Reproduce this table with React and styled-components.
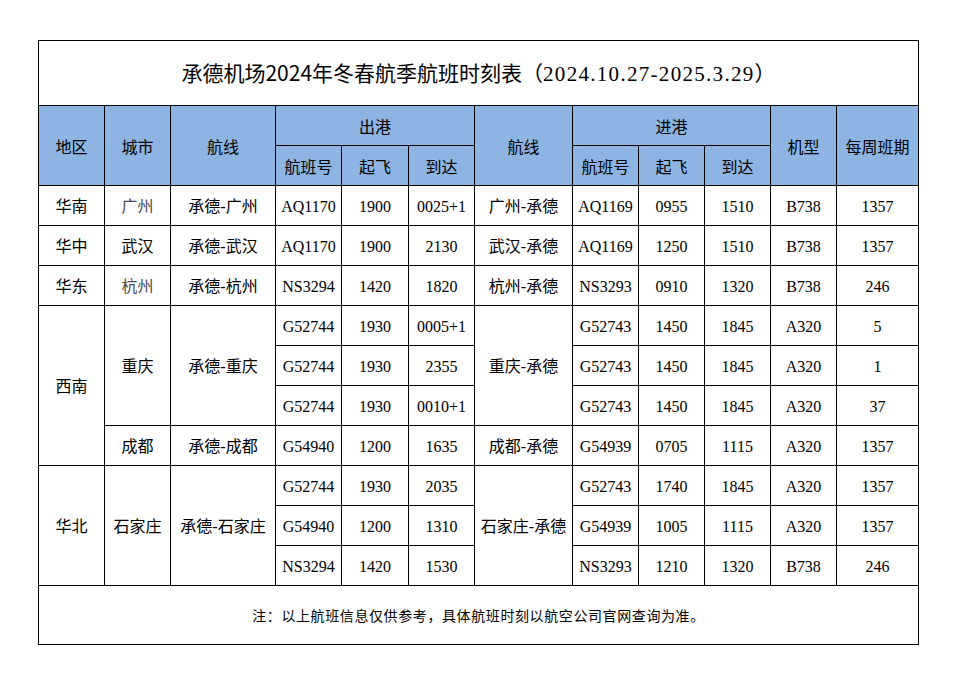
import React from "react";
import styled, { createGlobalStyle } from "styled-components";

const GlobalStyle = createGlobalStyle`
  html, body {
    margin: 0;
    padding: 0;
    background: #fff;
  }
  body {
    font-family: "Liberation Serif", "Noto Sans CJK SC", serif;
    color: #000;
  }
`;

const Page = styled.div`
  padding: 40px 0 0 38px;
`;

const Sheet = styled.table`
  border-collapse: collapse;
  table-layout: fixed;
  width: 881px;
  font-size: 16px;
`;

const Title = styled.td`
  height: 64px;
  padding: 0;
  border: 1px solid #000;
  text-align: center;
  vertical-align: middle;
  font-family: "Noto Sans CJK SC", sans-serif;
  font-size: 21px;
  line-height: 1;
`;

const DateText = styled.span`
  font-family: "Liberation Serif", serif;
  letter-spacing: 1.3px;
`;

const Head = styled.th`
  height: 40px;
  padding: 0;
  box-sizing: border-box;
  border: 1px solid #000;
  background: #8db4e2;
  font-weight: normal;
  font-family: "Noto Sans CJK SC", sans-serif;
  text-align: center;
  vertical-align: middle;
  line-height: 1;
`;

const Cell = styled.td`
  height: 40px;
  padding: 2px 0 0;
  box-sizing: border-box;
  border: 1px solid #000;
  text-align: center;
  vertical-align: middle;
  line-height: 1;
  white-space: nowrap;
  color: ${(p) => (p.$muted ? "#4a4a55" : "#000")};
`;

const Note = styled.td`
  height: 59px;
  padding: 0;
  box-sizing: border-box;
  border: 1px solid #000;
  text-align: center;
  vertical-align: middle;
  font-family: "Noto Sans CJK SC", sans-serif;
  font-size: 14px;
  letter-spacing: 0.6px;
  line-height: 1;
`;

const widths = [66, 66, 105, 66, 67, 66, 98, 66, 66, 66, 66, 82];

// each flight row: leading cells (may span rows), outbound leg, inbound leg, aircraft, days
const rows = [
  {
    lead: [["华南"], ["广州", 1, true], ["承德-广州"]],
    out: ["AQ1170", "1900", "0025+1"],
    route: ["广州-承德"],
    back: ["AQ1169", "0955", "1510"],
    tail: ["B738", "1357"],
  },
  {
    lead: [["华中"], ["武汉"], ["承德-武汉"]],
    out: ["AQ1170", "1900", "2130"],
    route: ["武汉-承德"],
    back: ["AQ1169", "1250", "1510"],
    tail: ["B738", "1357"],
  },
  {
    lead: [["华东"], ["杭州", 1, true], ["承德-杭州"]],
    out: ["NS3294", "1420", "1820"],
    route: ["杭州-承德"],
    back: ["NS3293", "0910", "1320"],
    tail: ["B738", "246"],
  },
  {
    lead: [["西南", 4], ["重庆", 3], ["承德-重庆", 3]],
    out: ["G52744", "1930", "0005+1"],
    route: ["重庆-承德", 3],
    back: ["G52743", "1450", "1845"],
    tail: ["A320", "5"],
  },
  {
    lead: [],
    out: ["G52744", "1930", "2355"],
    back: ["G52743", "1450", "1845"],
    tail: ["A320", "1"],
  },
  {
    lead: [],
    out: ["G52744", "1930", "0010+1"],
    back: ["G52743", "1450", "1845"],
    tail: ["A320", "37"],
  },
  {
    lead: [["成都"], ["承德-成都"]],
    out: ["G54940", "1200", "1635"],
    route: ["成都-承德"],
    back: ["G54939", "0705", "1115"],
    tail: ["A320", "1357"],
  },
  {
    lead: [["华北", 3], ["石家庄", 3], ["承德-石家庄", 3]],
    out: ["G52744", "1930", "2035"],
    route: ["石家庄-承德", 3],
    back: ["G52743", "1740", "1845"],
    tail: ["A320", "1357"],
  },
  {
    lead: [],
    out: ["G54940", "1200", "1310"],
    back: ["G54939", "1005", "1115"],
    tail: ["A320", "1357"],
  },
  {
    lead: [],
    out: ["NS3294", "1420", "1530"],
    back: ["NS3293", "1210", "1320"],
    tail: ["B738", "246"],
  },
];

const Span = ({ cell }) => {
  const [text, span = 1, muted = false] = cell;
  return (
    <Cell rowSpan={span} $muted={muted}>
      {text}
    </Cell>
  );
};

const FlightRow = ({ row }) => (
  <tr>
    {row.lead.map((c, i) => (
      <Span key={"l" + i} cell={c} />
    ))}
    {row.out.map((t, i) => (
      <Cell key={"o" + i}>{t}</Cell>
    ))}
    {row.route && <Span cell={row.route} />}
    {row.back.map((t, i) => (
      <Cell key={"b" + i}>{t}</Cell>
    ))}
    {row.tail.map((t, i) => (
      <Cell key={"t" + i}>{t}</Cell>
    ))}
  </tr>
);

export default function App() {
  return (
    <Page>
      <GlobalStyle />
      <Sheet>
        <colgroup>
          {widths.map((w, i) => (
            <col key={i} style={{ width: w }} />
          ))}
        </colgroup>
        <tbody>
          <tr>
            <Title colSpan={12}>
              承德机场2024年冬春航季航班时刻表（<DateText>2024.10.27-2025.3.29</DateText>）
            </Title>
          </tr>
          <tr>
            <Head rowSpan={2}>地区</Head>
            <Head rowSpan={2}>城市</Head>
            <Head rowSpan={2}>航线</Head>
            <Head colSpan={3}>出港</Head>
            <Head rowSpan={2}>航线</Head>
            <Head colSpan={3}>进港</Head>
            <Head rowSpan={2}>机型</Head>
            <Head rowSpan={2}>每周班期</Head>
          </tr>
          <tr>
            <Head>航班号</Head>
            <Head>起飞</Head>
            <Head>到达</Head>
            <Head>航班号</Head>
            <Head>起飞</Head>
            <Head>到达</Head>
          </tr>
          {rows.map((r, i) => (
            <FlightRow key={i} row={r} />
          ))}
          <tr>
            <Note colSpan={12}>注：以上航班信息仅供参考，具体航班时刻以航空公司官网查询为准。</Note>
          </tr>
        </tbody>
      </Sheet>
    </Page>
  );
}
